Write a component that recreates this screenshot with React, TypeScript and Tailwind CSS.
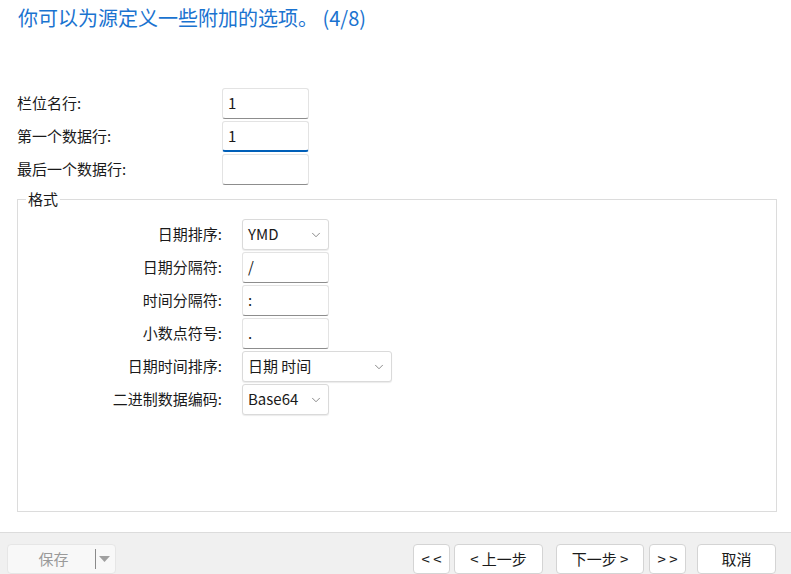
import { ChevronDown } from 'lucide-react';

const font = { fontFamily: '"Noto Sans CJK SC", "Noto Sans", sans-serif' };

function TextBox({ value, focused, width = 'w-[87px]' }: { value: string; focused?: boolean; width?: string }) {
  return (
    <div
      className={`${width} h-[31px] bg-white border border-[#e3e3e3] rounded-[3px] flex items-center px-[5px] text-[15px] text-[#1a1a1a] ${
        focused ? 'border-b-2 border-b-[#005fb8]' : 'border-b-[#8d8d8d]'
      }`}
    >
      {value}
    </div>
  );
}

function Select({ value, width }: { value: string; width: string }) {
  return (
    <div className={`${width} h-[31px] bg-white border border-[#dadada] rounded-[3px] shadow-[0_1px_1px_rgba(0,0,0,0.08)] flex items-center justify-between pl-[5px] pr-[5px] text-[15px] text-[#1a1a1a]`}>
      <span>{value}</span>
      <ChevronDown className="h-[14px] w-[14px] text-[#666]" strokeWidth={1.3} />
    </div>
  );
}

function Btn({ children, width, className = '' }: { children: React.ReactNode; width: string; className?: string }) {
  return (
    <button className={`${width} ${className} h-[30px] bg-white border border-[#d4d4d4] rounded-[4px] text-[15px] text-[#1a1a1a] flex items-center justify-center`}>
      {children}
    </button>
  );
}

export default function App() {
  const topRows = [
    { label: '栏位名行:', value: '1' },
    { label: '第一个数据行:', value: '1', focused: true },
    { label: '最后一个数据行:', value: '' },
  ];

  return (
    <div className="w-[791px] h-[574px] bg-white flex flex-col overflow-hidden" style={font}>
      <div className="h-[40px] pl-[18px] pt-[3px] text-[20px] text-[#1a73d0]">你可以为源定义一些附加的选项。 (4/8)</div>

      <div className="mt-[48px] flex flex-col gap-[2px]">
        {topRows.map(r => (
          <div key={r.label} className="flex items-center">
            <div className="w-[222px] pl-[17px] text-[15px] text-[#1a1a1a]">{r.label}</div>
            <TextBox value={r.value} focused={r.focused} />
          </div>
        ))}
      </div>

      <fieldset className="ml-[17px] mr-[14px] mt-[6px] h-[321px] border border-[#dcdcdc] px-0">
        <legend className="ml-[8px] px-[2px] text-[15px] text-[#1a1a1a] leading-[16px]">格式</legend>
        <div className="mt-[12px] flex flex-col gap-[2px]">
          <Row label="日期排序:"><Select value="YMD" width="w-[87px]" /></Row>
          <Row label="日期分隔符:"><TextBox value="/" /></Row>
          <Row label="时间分隔符:"><TextBox value=":" /></Row>
          <Row label="小数点符号:"><TextBox value="." /></Row>
          <Row label="日期时间排序:"><Select value="日期 时间" width="w-[150px]" /></Row>
          <Row label="二进制数据编码:"><Select value="Base64" width="w-[87px]" /></Row>
        </div>
      </fieldset>

      <div className="mt-auto h-[42px] border-t border-[#dcdcdc] bg-[#f0f0f0] flex items-start pt-[11px] pl-[7px] pr-[15px]">
        <div className="w-[109px] h-[30px] bg-[#f8f8f8] border border-[#e6e6e6] rounded-[4px] flex items-center text-[15px] text-[#9a9a9a]">
          <span className="flex-1 text-center pl-[4px]">保存</span>
          <span className="h-[20px] border-l border-[#8a8a8a]" />
          <svg width="18" height="10" viewBox="0 0 18 10" className="mr-[1px]">
            <path d="M3 2h11l-5.5 6z" fill="#a0a0a0" />
          </svg>
        </div>
        <div className="ml-auto flex">
          <Btn width="w-[37px]">&lt; &lt;</Btn>
          <Btn width="w-[89px]" className="ml-[4px]">&lt; 上一步</Btn>
          <Btn width="w-[88px]" className="ml-[13px]">下一步 &gt;</Btn>
          <Btn width="w-[37px]" className="ml-[5px]">&gt; &gt;</Btn>
          <Btn width="w-[79px]" className="ml-[11px]">取消</Btn>
        </div>
      </div>
    </div>
  );
}

function Row({ label, children }: { label: string; children: React.ReactNode }) {
  return (
    <div className="flex items-center">
      <div className="w-[204px] text-right text-[15px] text-[#1a1a1a]">{label}</div>
      <div className="ml-[20px]">{children}</div>
    </div>
  );
}
